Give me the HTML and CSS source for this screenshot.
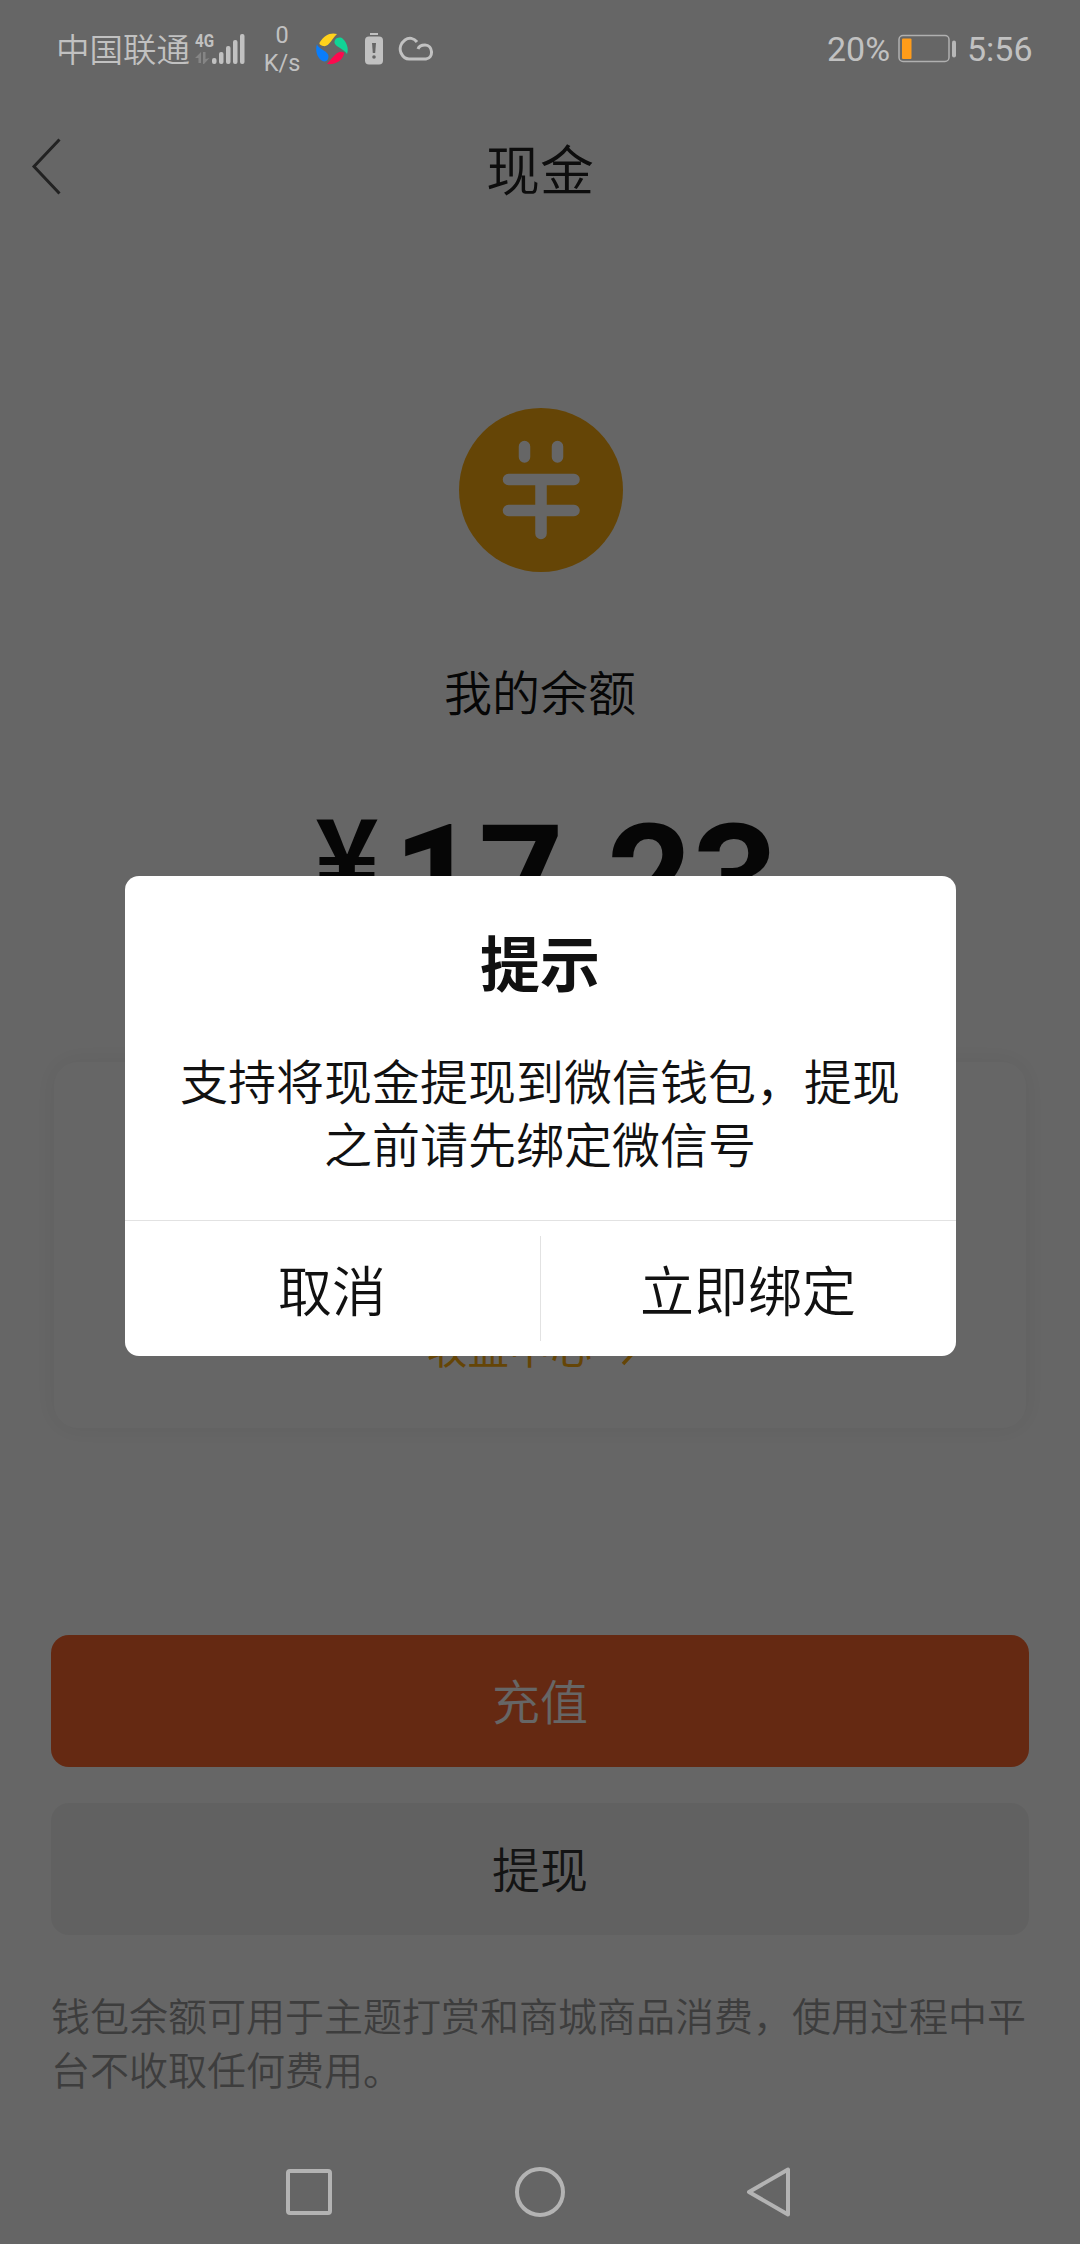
FILE: index.html
```html
<!DOCTYPE html>
<html lang="zh-CN">
<head>
<meta charset="utf-8">
<title>现金</title>
<link rel="stylesheet" href="styles.css">
</head>
<body>
<div class="screen">
  <div class="status">
    <span class="carrier">中国联通</span>
    <span class="signal">
      <span class="net">4G</span>
      <svg width="52" height="34" viewBox="0 0 52 34"><g fill="#858585"><path d="M7 20v11H4.500v-5H1zM9 20h2.500v7l4-1-5.500 6H9z"/></g><g fill="#c1c1c1"><rect x="18" y="26" width="4.500" height="6" rx="2"/><rect x="25" y="20" width="4.500" height="12" rx="2"/><rect x="32" y="14" width="4.500" height="18" rx="2"/><rect x="39" y="8" width="4.500" height="24" rx="2"/><rect x="46" y="2" width="4.500" height="30" rx="2"/></g></svg>
    </span>
    <span class="speed"><span>0</span><span>K/s</span></span>
    <svg class="ball" width="34" height="34" viewBox="0 0 34 34"><path fill="#ffd21c" d="M5 10C9 3 16 0 22 2c-1 1-3 3-5 6s-5 7-9 6-4-3-3-4z"/><path fill="#10d496" d="M20 8c2-3 6-3 8-1 4 4 6 10 4 15-1-2-4-4-7-6s-7-4-5-8z"/><path fill="#fb0a4e" d="M29 22c-2 7-9 11-17 10 2-2 3-4 6-7s6-6 9-5 2 1 2 2z"/><path fill="#0a7dfa" d="M2 12c0 2 3 4 6 6s7 4 5 9c-1 3-5 3-7 1-4-3-6-10-4-16z"/></svg>
    <svg class="alert" width="18" height="34" viewBox="0 0 18 34"><path stroke="#c1c1c1" stroke-width="2" d="M5 2h8"/><rect y="4.500" width="18" height="28" rx="4" fill="#c1c1c1"/><path d="M7 11h4l-.8 10H7.800z" fill="#666"/><circle cx="9" cy="25" r="1.800" fill="#666"/></svg>
    <svg class="cloud" width="36" height="26" viewBox="0 0 36 26"><path fill="none" stroke="#c1c1c1" stroke-width="3" d="M19 6C16 2 11 1 7 4c-4 3-6 8-4 13 2 4 4 6 8 6h17c8-1 7-14-1-14-3 0-6 1-7 4"/></svg>
    <span class="pct">20%</span>
    <svg class="batt" width="60" height="30" viewBox="0 0 60 30"><rect x="1" y="1.500" width="50" height="26" rx="4" fill="none" stroke="#b0b0b0" stroke-width="1.500"/><rect x="4" y="4.500" width="9.500" height="20.500" rx="1" fill="#ff9c1a"/><rect x="54" y="6.500" width="4" height="17" rx="2" fill="#b8b8b8"/></svg>
    <span class="clock">5:56</span>
  </div>
  <header class="header">
    <svg class="back" width="32" height="60" viewBox="0 0 32 60"><path d="M29.500 2.500 4 29.500l25.500 27" fill="none" stroke="#555" stroke-width="3"/></svg>
    <h1 class="title">现金</h1>
  </header>
  <main class="wallet">
    <svg class="coin" width="166" height="166" viewBox="0 0 166 166"><circle cx="83" cy="83" r="82" fill="#fdac0f"/><g stroke="#fff" stroke-width="11.500" stroke-linecap="round"><path d="M66.500 39.500v10.500M99.500 39.500v10.500M50.500 72.500h65.500M50.500 103.500h65.500M83 72.500v54"/></g></svg>
    <p class="label">我的余额</p>
    <p class="amount"><span class="yen">¥</span><span>17.23</span></p>
    <section class="card"><a class="income">收益中心<svg width="20" height="34" viewBox="0 0 20 34"><path d="m3 3 13 14L3 31" fill="none" stroke="#fdac0f" stroke-width="3.500"/></svg></a></section>
    <button class="btn primary">充值</button>
    <button class="btn">提现</button>
    <p class="note">钱包余额可用于主题打赏和商城商品消费，使用过程中平台不收取任何费用。</p>
  </main>
  <nav class="nav">
    <svg width="50" height="54" viewBox="0 0 50 54"><rect x="4" y="6" width="42" height="42" rx="2" /></svg>
    <svg width="54" height="54" viewBox="0 0 54 54"><circle cx="27" cy="27" r="23"/></svg>
    <svg width="50" height="54" viewBox="0 0 50 54"><path d="M42 4.500v45L3 27z"/></svg>
  </nav>
  <div class="overlay">
    <div class="dialog">
      <div class="dialog-body">
        <h2 class="dialog-title">提示</h2>
        <p class="dialog-text">支持将现金提现到微信钱包，提现之前请先绑定微信号</p>
      </div>
      <div class="actions"><span class="action">取消</span><i class="split"></i><span class="action">立即绑定</span></div>
    </div>
  </div>
</div>
</body>
</html>
```
FILE: styles.css
```css
* { box-sizing: border-box; margin: 0; padding: 0; }
body { background: #fff; font-family: Roboto, "Noto Sans CJK SC", sans-serif; font-weight: 350; }
svg { display: block; flex: none; }
.screen { position: relative; width: 1080px; height: 2244px; overflow: hidden; display: flex; flex-direction: column; background: #fff; }

.status { position: relative; z-index: 2; height: 98px; padding-left: 56px; display: flex; align-items: center; color: #c1c1c1; }
.carrier { width: 138px; padding-bottom: 3px; font-size: 33.5px; white-space: nowrap; }
.signal { position: relative; width: 52px; margin-right: 19px; }
.net { position: absolute; left: 1px; top: -1px; font: 700 19px/20px Roboto, sans-serif; transform: scaleX(.8); transform-origin: 0 0; }
.speed { width: 34px; display: flex; flex-direction: column; align-items: center; font-size: 23.5px; line-height: 28px; font-weight: 400; white-space: nowrap; }
.ball { margin-left: 16px; }
.alert { margin-left: 16px; }
.cloud { margin-left: 15px; }
.pct { margin-left: auto; width: 70px; font-size: 34px; font-weight: 400; white-space: nowrap; }
.batt { margin-left: 1px; }
.clock { margin-left: 9px; width: 113px; font-size: 34px; font-weight: 400; }

.header { height: 146px; padding-left: 30px; padding-top: 39px; display: flex; }
.title { padding-top: 2px; width: 1020px; margin-left: -32px; text-align: center; font-size: 54px; line-height: 68px; font-weight: 350; color: #222; }

.wallet { height: 1896px; padding: 163px 51px 0; display: flex; flex-direction: column; align-items: center; }
.coin { margin-left: 2px; }
.label { margin-top: 86px; font-size: 48px; line-height: 72px; color: #111; }
.amount { margin-top: 60px; margin-left: 10px; height: 271px; display: flex; color: #111; font-weight: 700; font-size: 149px; line-height: 176px; }
.yen { width: 66px; padding-left: 4px; display: flex; justify-content: center; font-family: "Noto Sans CJK SC", sans-serif; font-size: 110px; font-weight: 700; line-height: 121px; margin-right: 15px; }
.card { width: 972px; height: 366px; border-radius: 24px; box-shadow: 0 0 24px rgba(0, 0, 0, .07); display: flex; align-items: flex-end; justify-content: center; padding: 0 14px 48px 0; }
.income { display: flex; align-items: center; gap: 28px; font-size: 41.500px; line-height: 60px; font-weight: 400; color: #fdac0f; }
.btn { width: 978px; height: 132px; border: 0; border-radius: 18px; background: #f3f3f3; color: #333; font: 350 48px Roboto, "Noto Sans CJK SC", sans-serif; margin-bottom: 36px; padding-bottom: 4px; flex: none; }
.primary { margin-top: 207px; background: #fd672d; color: #fff; }
.note { width: 978px; margin-top: 20px; font-size: 39px; line-height: 54px; color: #999; }

.nav { position: relative; z-index: 2; height: 104px; background: #656565; display: flex; align-items: center; justify-content: center; gap: 179px; }
.nav svg { fill: none; stroke: #b3b3b3; stroke-width: 4; stroke-linejoin: round; }

.overlay { position: absolute; inset: 0; background: rgba(0, 0, 0, .6); display: flex; justify-content: center; align-items: flex-start; padding-top: 876px; }
.dialog { width: 831px; height: 480px; border-radius: 14px; background: #fff; color: #111; display: flex; flex-direction: column; }
.dialog-body { height: 345px; padding: 46px 50px 0; border-bottom: 1px solid #e2e2e2; text-align: center; }
.dialog-title { font-size: 60px; line-height: 90px; font-weight: 700; }
.dialog-text { margin-top: 40px; font-size: 48px; line-height: 63px; }
.actions { flex: 1; display: flex; align-items: center; }
.action { flex: 1; padding-top: 10px; text-align: center; font-size: 54px; line-height: 80px; }
.split { width: 1px; height: 105px; background: #e2e2e2; }
```
